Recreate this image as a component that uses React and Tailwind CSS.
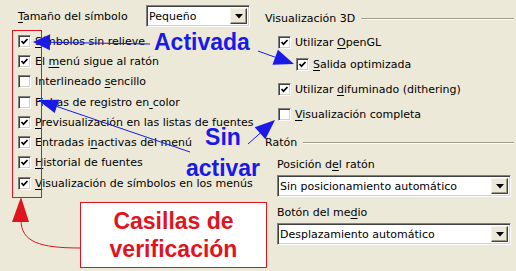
import React from "react";

const BLUE = "#1a1ae6";
const RED = "#e0141e";

// label with one underlined (mnemonic) letter
const Label = ({ text, u }) => {
  if (u == null) return <span className="whitespace-nowrap">{text}</span>;
  return (
    <span className="whitespace-nowrap">
      {text.slice(0, u)}
      <span className="underline underline-offset-2">{text[u]}</span>
      {text.slice(u + 1)}
    </span>
  );
};

const CheckBox = ({ checked }) => (
  <div className="w-[13px] h-[13px] shrink-0 bg-white border border-t-[#808080] border-l-[#808080] border-r-white border-b-white shadow-[inset_1px_1px_0_#404040,inset_-1px_-1px_0_#d4d0c8] flex items-center justify-center">
    {checked && (
      <svg width="9" height="9" viewBox="0 0 9 9">
        <polyline points="1.5,4 3.5,6.2 7.5,2" fill="none" stroke="#000" strokeWidth="1.7" />
      </svg>
    )}
  </div>
);

const CheckRow = ({ checked, text, u, className = "" }) => (
  <div className={"flex items-center gap-[4px] " + className}>
    <CheckBox checked={checked} />
    <Label text={text} u={u} />
  </div>
);

const Select = ({ value, className = "" }) => (
  <div className={"h-[22px] flex items-center bg-white border border-t-[#808080] border-l-[#808080] border-r-white border-b-white shadow-[inset_1px_1px_0_#404040,inset_-1px_-1px_0_#d4d0c8] pl-[2px] pr-[2px] " + className}>
    <span className="flex-1 whitespace-nowrap overflow-hidden">{value}</span>
    <div className="w-[17px] h-[16px] bg-[#ece9d8] border border-t-[#f4f2ea] border-l-[#f4f2ea] border-r-[#404040] border-b-[#404040] shadow-[inset_-1px_-1px_0_#9d9a8a] flex items-center justify-center">
      <svg width="8" height="5" viewBox="0 0 8 5">
        <polygon points="0,0 8,0 4,4.5" fill="#000" />
      </svg>
    </div>
  </div>
);

const GroupTitle = ({ text }) => (
  <div className="flex items-center">
    <span className="whitespace-nowrap">{text}</span>
    <div className="flex-1 ml-[6px] mr-[2px] h-[2px] border-t border-[#a09d8c] border-b border-b-white" />
  </div>
);

// arrow with filled head, computed from tail/tip
const Arrow = ({ from, to, color, len = 18, half = 8 }) => {
  const dx = to[0] - from[0];
  const dy = to[1] - from[1];
  const d = Math.hypot(dx, dy);
  const ux = dx / d;
  const uy = dy / d;
  const bx = to[0] - ux * len;
  const by = to[1] - uy * len;
  const p1 = [bx - uy * half, by + ux * half];
  const p2 = [bx + uy * half, by - ux * half];
  return (
    <g>
      <line x1={from[0]} y1={from[1]} x2={bx} y2={by} stroke={color} strokeWidth="1" />
      <polygon points={`${to[0]},${to[1]} ${p1[0]},${p1[1]} ${p2[0]},${p2[1]}`} fill={color} />
    </g>
  );
};

const leftRows = [
  { checked: true, text: "Símbolos sin relieve", u: 0 },
  { checked: true, text: "El menú sigue al ratón", u: 3 },
  { checked: false, text: "Interlineado sencillo", u: 13 },
  { checked: false, text: "Fichas de registro en color", u: 21 },
  { checked: true, text: "Previsualización en las listas de fuentes", u: 0 },
  { checked: true, text: "Entradas inactivas del menú", u: 10 },
  { checked: true, text: "Historial de fuentes", u: 0 },
  { checked: true, text: "Visualización de símbolos en los menús", u: 0 },
];

export default function App() {
  return (
    <div
      className="relative w-[516px] h-[271px] overflow-hidden bg-[#ece9d8] text-black text-[11px] leading-none flex"
      style={{ fontFamily: '"DejaVu Sans", Verdana, sans-serif' }}
    >
      {/* left column */}
      <div className="w-[256px] shrink-0 pl-[18px] pt-[5px] flex flex-col">
        <div className="flex items-center h-[22px]">
          <span className="w-[128px]">
            <Label text="Tamaño del símbolo" u={0} />
          </span>
          <Select value="Pequeño" className="w-[104px]" />
        </div>
        <div className="flex flex-col mt-[4px]">
          {leftRows.map((r, i) => (
            <CheckRow key={i} {...r} className="h-[20.3px]" />
          ))}
        </div>
      </div>

      {/* right column */}
      <div className="flex-1 pl-[9px] pt-[13px] flex flex-col">
        <GroupTitle text="Visualización 3D" />
        <div className="pl-[13px] flex flex-col">
          <CheckRow checked text="Utilizar OpenGL" u={9} className="h-[22px] mt-[7px]" />
          <CheckRow checked text="Salida optimizada" u={0} className="h-[22px] pl-[18px]" />
          <CheckRow checked text="Utilizar difuminado (dithering)" u={9} className="h-[22px] mt-[3px]" />
          <CheckRow checked={false} text="Visualización completa" u={0} className="h-[22px] mt-[3px]" />
        </div>
        <div className="mt-[12px]">
          <GroupTitle text="Ratón" />
        </div>
        <div className="pl-[12px] pr-[5px] flex flex-col">
          <div className="mt-[11px]">
            <Label text="Posición del ratón" u={10} />
          </div>
          <Select value="Sin posicionamiento automático" className="mt-[5px]" />
          <div className="mt-[10px]">
            <Label text="Botón del medio" u={12} />
          </div>
          <Select value="Desplazamiento automático" className="mt-[5px]" />
        </div>
      </div>

      {/* annotations */}
      <div className="absolute left-[12px] top-[30px] w-[30px] h-[168px] border border-[#e0141e]" />
      <div
        className="absolute left-[80px] top-[202px] w-[187px] h-[66px] bg-white border border-[#e0141e] flex flex-col items-center justify-center text-[23px] font-bold leading-[28px] text-[#e0141e]"
        style={{ fontFamily: '"Liberation Sans", Arial, sans-serif' }}
      >
        <span>Casillas de</span>
        <span>verificación</span>
      </div>
      <div
        className="absolute left-[154px] top-[31px] text-[23px] font-bold leading-none text-[#1a1ae6]"
        style={{ fontFamily: '"Liberation Sans", Arial, sans-serif' }}
      >
        Activada
      </div>
      <div
        className="absolute left-[183px] top-[122px] w-[80px] flex flex-col items-center text-[23px] font-bold leading-[31px] text-[#1a1ae6]"
        style={{ fontFamily: '"Liberation Sans", Arial, sans-serif' }}
      >
        <span>Sin</span>
        <span>activar</span>
      </div>

      <svg className="absolute inset-0 pointer-events-none" width="516" height="271" viewBox="0 0 516 271">
        <Arrow from={[150, 44]} to={[33, 42]} color={BLUE} len={17} half={8} />
        <Arrow from={[258, 51]} to={[294, 64]} color={BLUE} len={20} half={8} />
        <Arrow from={[190, 152]} to={[38, 100]} color={BLUE} len={20} half={7} />
        <Arrow from={[248, 144]} to={[275, 120]} color={BLUE} len={20} half={8} />
        <path d="M80 248 C 40 248, 21 242, 21 220" fill="none" stroke={RED} strokeWidth="1" />
        <polygon points="21,197 12,222 29,222" fill={RED} />
      </svg>
    </div>
  );
}
